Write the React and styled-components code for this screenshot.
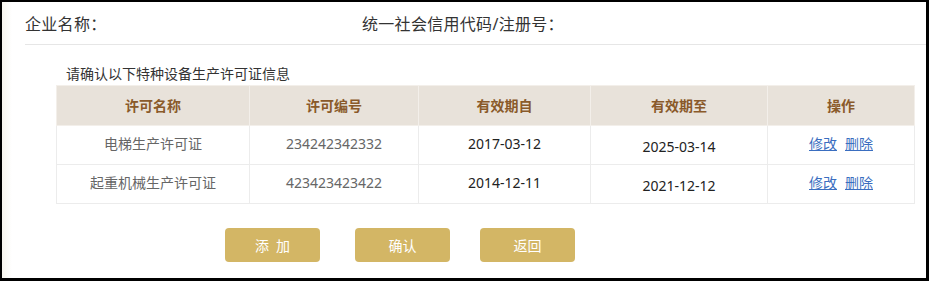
import React from "react";
import styled, { createGlobalStyle } from "styled-components";

const GlobalStyle = createGlobalStyle`
  html, body {
    margin: 0;
    padding: 0;
    background: #fff;
  }
  body {
    font-family: "Noto Sans", "Noto Sans CJK SC", sans-serif;
  }
`;

const Frame = styled.div`
  width: 929px;
  height: 281px;
  box-sizing: border-box;
  border: 2px solid #000;
  border-bottom-width: 3px;
  border-right-width: 3px;
  background: linear-gradient(to right, #f7f5ee 0px, #fff 10px);
  overflow: hidden;
`;

const InfoBar = styled.div`
  display: flex;
  align-items: center;
  height: 42px;
  margin-left: 23px;
  border-bottom: 1px solid #e6e6e6;
  background: #fff;
`;

const InfoLabel = styled.div`
  width: ${(p) => p.$width || "auto"};
  font-size: 16px;
  color: #333;
  letter-spacing: 0.3px;
`;

const Section = styled.div`
  padding: 20px 0 0 54px;
`;

const Caption = styled.div`
  font-size: 14px;
  color: #333;
  line-height: 18px;
  margin-left: 10px;
  margin-bottom: 2px;
`;

const Table = styled.table`
  width: 858px;
  border-collapse: collapse;
  table-layout: fixed;
`;

const HeadCell = styled.th`
  height: 39px;
  padding: 0;
  line-height: 20px;
  background: #e8e2da;
  color: #8a5a2a;
  font-size: 14px;
  font-weight: bold;
  border: 1px solid #f3efea;
  text-align: center;
`;

const Cell = styled.td`
  height: 39px;
  padding: ${(p) => (p.$low ? "4px 0 0" : "0 0 2px")};
  box-sizing: border-box;
  line-height: 20px;
  font-size: 14px;
  color: ${(p) => (p.$dark ? "#222" : "#666")};
  border: 1px solid #ececec;
  text-align: center;
`;

const Link = styled.a`
  color: #3a6ec0;
  text-decoration: underline;
  cursor: pointer;
  margin: 0 4px;
`;

const Buttons = styled.div`
  display: flex;
  padding: 24px 0 0 223px;
`;

const Button = styled.button`
  width: 95px;
  height: 34px;
  margin-right: ${(p) => p.$gap || "0"};
  border: none;
  border-radius: 4px;
  background: #d3b665;
  color: #fff;
  font-size: 14px;
  font-family: "Noto Sans CJK SC", sans-serif;
  cursor: pointer;
`;

const rows = [
  { name: "电梯生产许可证", no: "234242342332", from: "2017-03-12", to: "2025-03-14" },
  { name: "起重机械生产许可证", no: "423423423422", from: "2014-12-11", to: "2021-12-12" },
];

export default function App() {
  return (
    <Frame>
      <GlobalStyle />
      <InfoBar>
        <InfoLabel $width="337px">企业名称：</InfoLabel>
        <InfoLabel>统一社会信用代码/注册号：</InfoLabel>
      </InfoBar>
      <Section>
        <Caption>请确认以下特种设备生产许可证信息</Caption>
        <Table>
          <colgroup>
            <col style={{ width: 193 }} />
            <col style={{ width: 169 }} />
            <col style={{ width: 172 }} />
            <col style={{ width: 177 }} />
            <col style={{ width: 147 }} />
          </colgroup>
          <thead>
            <tr>
              <HeadCell>许可名称</HeadCell>
              <HeadCell>许可编号</HeadCell>
              <HeadCell>有效期自</HeadCell>
              <HeadCell>有效期至</HeadCell>
              <HeadCell>操作</HeadCell>
            </tr>
          </thead>
          <tbody>
            {rows.map((r) => (
              <tr key={r.no}>
                <Cell>{r.name}</Cell>
                <Cell>{r.no}</Cell>
                <Cell $dark>{r.from}</Cell>
                <Cell $dark $low>{r.to}</Cell>
                <Cell>
                  <Link>修改</Link>
                  <Link>删除</Link>
                </Cell>
              </tr>
            ))}
          </tbody>
        </Table>
      </Section>
      <Buttons>
        <Button $gap="35px">添{"\u2002"}加</Button>
        <Button $gap="30px">确认</Button>
        <Button>返回</Button>
      </Buttons>
    </Frame>
  );
}
